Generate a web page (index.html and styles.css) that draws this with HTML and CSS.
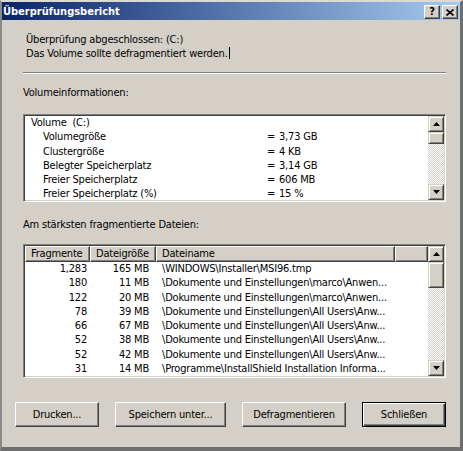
FILE: index.html
```
<!DOCTYPE html>
<html lang="de">
<head>
<meta charset="utf-8">
<title>Überprüfungsbericht</title>
<link rel="stylesheet" href="styles.css">
</head>
<body>
<div class="window">
  <div class="titlebar">
    <span class="title">Überprüfungsbericht</span>
    <div class="tb-buttons">
      <span class="tb-btn help">?</span>
      <span class="tb-btn close"><svg width="8" height="7" viewBox="0 0 8 7"><path d="M0.5 0.5 L7.5 6.5 M7.5 0.5 L0.5 6.5" stroke="#000" stroke-width="1.6" fill="none"/></svg></span>
    </div>
  </div>
  <div class="content">
    <div class="message">
      <div>Überprüfung abgeschlossen: (C:)</div>
      <div>Das Volume sollte defragmentiert werden.<span class="caret"></span></div>
    </div>
    <div class="separator"></div>
    <div class="label label-vol">Volumeinformationen:</div>
    <div class="field listbox">
      <div class="lb-rows">
        <div class="lb-row top">Volume&nbsp; (C:)</div>
        <div class="lb-row"><span>Volumegröße</span><span>=</span><span>3,73 GB</span></div>
        <div class="lb-row"><span>Clustergröße</span><span>=</span><span>4 KB</span></div>
        <div class="lb-row"><span>Belegter Speicherplatz</span><span>=</span><span>3,14 GB</span></div>
        <div class="lb-row"><span>Freier Speicherplatz</span><span>=</span><span>606 MB</span></div>
        <div class="lb-row"><span>Freier Speicherplatz (%)</span><span>=</span><span>15 %</span></div>
      </div>
      <div class="scrollbar">
        <div class="sb-btn"><svg width="7" height="4" viewBox="0 0 7 4"><polygon points="0,4 3.5,0 7,4" fill="#000"/></svg></div>
        <div class="sb-thumb small"></div>
        <div class="sb-track"></div>
        <div class="sb-btn"><svg width="7" height="4" viewBox="0 0 7 4"><polygon points="0,0 3.5,4 7,0" fill="#000"/></svg></div>
      </div>
    </div>
    <div class="label label-files">Am stärksten fragmentierte Dateien:</div>
    <div class="field listview">
      <div class="lv-main">
        <div class="lv-header">
          <div class="hd c-frag">Fragmente</div>
          <div class="hd c-size">Dateigröße</div>
          <div class="hd c-name">Dateiname</div>
          <div class="hd c-blank"></div>
        </div>
        <div class="lv-row"><span class="c-frag">1,283</span><span class="c-size">165 MB</span><span class="c-name">\WINDOWS\Installer\MSI96.tmp</span></div>
        <div class="lv-row"><span class="c-frag">180</span><span class="c-size">11 MB</span><span class="c-name">\Dokumente und Einstellungen\marco\Anwen...</span></div>
        <div class="lv-row"><span class="c-frag">122</span><span class="c-size">20 MB</span><span class="c-name">\Dokumente und Einstellungen\marco\Anwen...</span></div>
        <div class="lv-row"><span class="c-frag">78</span><span class="c-size">39 MB</span><span class="c-name">\Dokumente und Einstellungen\All Users\Anw...</span></div>
        <div class="lv-row"><span class="c-frag">66</span><span class="c-size">67 MB</span><span class="c-name">\Dokumente und Einstellungen\All Users\Anw...</span></div>
        <div class="lv-row"><span class="c-frag">52</span><span class="c-size">38 MB</span><span class="c-name">\Dokumente und Einstellungen\All Users\Anw...</span></div>
        <div class="lv-row"><span class="c-frag">52</span><span class="c-size">42 MB</span><span class="c-name">\Dokumente und Einstellungen\All Users\Anw...</span></div>
        <div class="lv-row"><span class="c-frag">31</span><span class="c-size">14 MB</span><span class="c-name">\Programme\InstallShield Installation Informa...</span></div>
      </div>
      <div class="scrollbar">
        <div class="sb-btn"><svg width="7" height="4" viewBox="0 0 7 4"><polygon points="0,4 3.5,0 7,4" fill="#000"/></svg></div>
        <div class="sb-thumb large"></div>
        <div class="sb-track"></div>
        <div class="sb-btn"><svg width="7" height="4" viewBox="0 0 7 4"><polygon points="0,0 3.5,4 7,0" fill="#000"/></svg></div>
      </div>
    </div>
    <div class="buttons">
      <div class="btn w84">Drucken...</div>
      <div class="btn w111">Speichern unter...</div>
      <div class="btn w104">Defragmentieren</div>
      <div class="btn w84 default">Schließen</div>
    </div>
  </div>
</div>
</body>
</html>
```
FILE: styles.css
```
* { box-sizing: border-box; }
html, body { margin: 0; padding: 0; }
body {
  width: 463px;
  height: 451px;
  overflow: hidden;
  background: #d4d0c8;
  font-family: "DejaVu Sans Condensed", "DejaVu Sans", sans-serif;
  font-stretch: condensed;
  font-size: 11px;
  letter-spacing: -0.2px;
  color: #000;
}
.window {
  width: 463px;
  height: 451px;
  border-style: solid;
  border-width: 2px 3px 4px 2px;
  border-color: #dcdad5 #6e6e6e #6e6e6e #8a8a8a;
  background: #d4d0c8;
  display: flex;
  flex-direction: column;
}
.titlebar {
  height: 18px;
  flex: none;
  background: linear-gradient(to right, #0a246a, #a6caf0);
  display: flex;
  align-items: center;
  justify-content: space-between;
  padding: 0 2px 0 1px;
}
.title {
  color: #fff;
  font-weight: bold;
  font-size: 11px;
  letter-spacing: 0;
  line-height: 18px;
  padding-top: 1px;
}
.tb-buttons { display: flex; gap: 2px; align-self: flex-start; margin-top: 3px; }
.tb-btn {
  width: 16px;
  height: 14px;
  background: #d4d0c8;
  border: 1px solid;
  border-color: #fff #404040 #404040 #fff;
  box-shadow: inset -1px -1px #808080;
  display: flex;
  align-items: center;
  justify-content: center;
  font-weight: bold;
  font-size: 11px;
  letter-spacing: 0;
  line-height: 12px;
}
.content {
  flex: 1;
  display: flex;
  flex-direction: column;
  padding: 0 14px 0 21px;
}
.message {
  margin-top: 13px;
  padding-left: 3px;
  line-height: 14px;
}
.caret {
  display: inline-block;
  width: 1px;
  height: 12px;
  background: #000;
  vertical-align: -2px;
  margin-left: 1px;
}
.separator {
  margin-top: 11px;
  height: 2px;
  border-top: 1px solid #808080;
  border-bottom: 1px solid #fff;
}
.label { line-height: 14px; }
.label-vol { margin-top: 12px; }
.label-files { margin-top: 16px; }
.field {
  background: #fff;
  border: 1px solid;
  border-color: #808080 #fff #fff #808080;
  box-shadow: inset 1px 1px #404040, inset -1px -1px #d4d0c8;
  padding: 1px;
  display: flex;
  overflow: hidden;
}
.listbox { margin-top: 14px; height: 88px; }
.lb-rows { flex: 1; overflow: hidden; }
.lb-row {
  height: 14.3px;
  line-height: 14.3px;
  display: grid;
  grid-template-columns: 224px 12px auto;
  padding-left: 18px;
  white-space: nowrap;
}
.lb-row.top { display: block; padding-left: 6px; }
.scrollbar {
  width: 16px;
  flex: none;
  display: flex;
  flex-direction: column;
}
.sb-btn, .sb-thumb {
  width: 16px;
  background: #d4d0c8;
  border: 1px solid;
  border-color: #d4d0c8 #404040 #404040 #d4d0c8;
  box-shadow: inset 1px 1px #fff, inset -1px -1px #808080;
  flex: none;
}
.sb-btn {
  height: 16px;
  display: flex;
  align-items: center;
  justify-content: center;
}
.sb-btn svg { display: block; }
.sb-thumb.small { height: 12px; }
.sb-thumb.large { height: 26px; }
.sb-track {
  flex: 1;
  background: repeating-conic-gradient(#d4d0c8 0 25%, #fff 0 50%) 0 0 / 2px 2px;
}
.listview { margin-top: 12px; height: 134px; }
.lv-main { flex: 1; display: flex; flex-direction: column; overflow: hidden; }
.lv-header { display: flex; height: 16px; flex: none; }
.hd {
  height: 16px;
  background: #d4d0c8;
  border: 1px solid;
  border-color: #fff #404040 #404040 #fff;
  box-shadow: inset -1px -1px #808080;
  line-height: 14px;
  padding-left: 5px;
  white-space: nowrap;
  overflow: hidden;
  flex: none;
}
.c-frag { width: 65px; flex: none; }
.c-size { width: 66px; flex: none; }
.c-name { width: 239px; flex: none; }
.c-blank { flex: 1; }
.lv-row {
  display: flex;
  height: 14.3px;
  line-height: 14.3px;
  white-space: nowrap;
}
.lv-row .c-frag { text-align: right; padding-right: 3px; }
.lv-row .c-size { text-align: right; padding-right: 7px; }
.lv-row .c-name { padding-left: 6px; overflow: hidden; }
.buttons {
  margin-top: 24px;
  margin-left: -8px;
  display: flex;
  gap: 16px;
}
.btn {
  height: 25px;
  background: #d4d0c8;
  border: 1px solid;
  border-color: #fff #404040 #404040 #fff;
  box-shadow: inset -1px -1px #808080;
  display: flex;
  align-items: center;
  justify-content: center;
  white-space: nowrap;
}
.btn.default {
  border: 1px solid #000;
  box-shadow: inset 1px 1px #fff, inset -1px -1px #404040, inset -2px -2px #808080;
}
.w84 { width: 84px; }
.w111 { width: 111px; }
.w104 { width: 104px; }
```
